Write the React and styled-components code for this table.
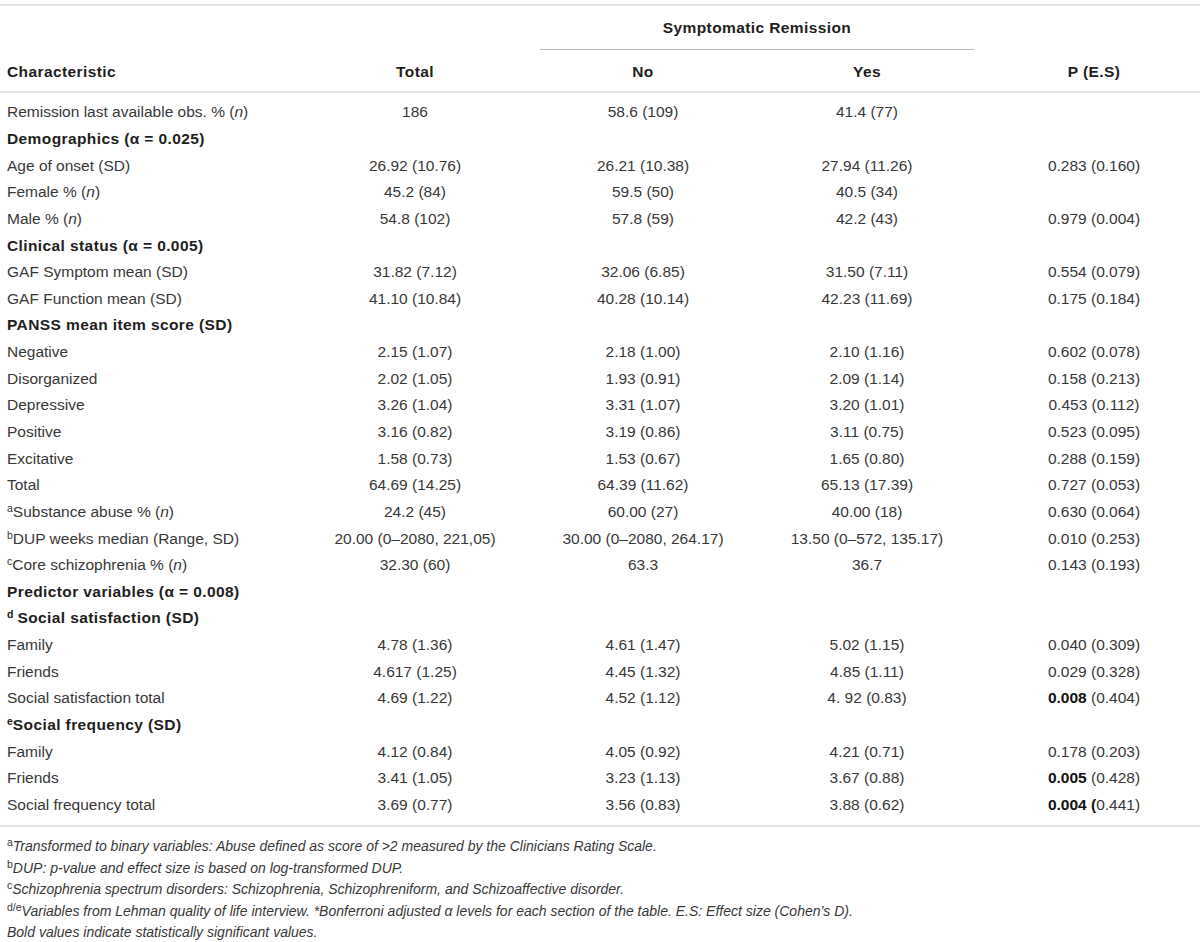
import React from 'react';
import styled, { createGlobalStyle } from 'styled-components';

const GlobalStyle = createGlobalStyle`
  body {
    margin: 0;
    background: #fff;
    font-family: "Liberation Sans", Arial, sans-serif;
    color: #383838;
  }
`;

const COLS = '290px 250px 206px 242px 212px';

const Page = styled.div`
  width: 1200px;
  padding-top: 4px;
`;

const Table = styled.div`
  border-top: 2px solid #e3e3e3;
  border-bottom: 2px solid #e3e3e3;
  padding-bottom: 7px;
`;

const Head = styled.div`
  border-bottom: 2px solid #e3e3e3;
  margin-bottom: 6px;
`;

const Row = styled.div`
  display: grid;
  grid-template-columns: ${COLS};
  height: ${(p) => p.$h || 26.65}px;
  padding-top: ${(p) => p.$pt || 0}px;
  box-sizing: border-box;
  align-items: center;
  font-size: 15.5px;
`;

const Spanner = styled.div`
  grid-column: 3 / 5;
  margin-right: 14px;
  height: 100%;
  display: flex;
  align-items: center;
  justify-content: center;
  border-bottom: 1px solid #b8b8b8;
  font-weight: bold;
  letter-spacing: 0.4px;
  color: #1e1e1e;
`;

const Cell = styled.div`
  text-align: ${(p) => (p.$first ? 'left' : 'center')};
  padding-left: ${(p) => (p.$first ? '7px' : '0')};
  font-weight: ${(p) => (p.$bold ? 'bold' : 'normal')};
  letter-spacing: ${(p) => (p.$bold ? '0.4px' : '0')};
  color: ${(p) => (p.$bold ? '#1e1e1e' : '#383838')};
  white-space: nowrap;
`;

const Sup = styled.sup`
  font-size: 10.5px;
  font-style: normal;
  vertical-align: 5px;
  line-height: 0;
  letter-spacing: 0;
  margin-right: ${(p) => (p.$gap ? '4px' : '0')};
`;

const B = styled.b`
  color: #111;
`;

const Notes = styled.div`
  padding-top: 9px;
  font-size: 14px;
  font-style: italic;
  color: #383838;
`;

const Note = styled.div`
  height: 21.5px;
  line-height: 21.5px;
  padding-left: 7px;
  white-space: nowrap;
`;

const S = (t) => ({ section: true, label: t });
const D = (label, total, no, yes, p) => ({ label, total, no, yes, p });

const rows = [
  D(<>Remission last available obs. % (<i>n</i>)</>, '186', '58.6 (109)', '41.4 (77)', ''),
  S('Demographics (α = 0.025)'),
  D('Age of onset (SD)', '26.92 (10.76)', '26.21 (10.38)', '27.94 (11.26)', '0.283 (0.160)'),
  D(<>Female % (<i>n</i>)</>, '45.2 (84)', '59.5 (50)', '40.5 (34)', ''),
  D(<>Male % (<i>n</i>)</>, '54.8 (102)', '57.8 (59)', '42.2 (43)', '0.979 (0.004)'),
  S('Clinical status (α = 0.005)'),
  D('GAF Symptom mean (SD)', '31.82 (7.12)', '32.06 (6.85)', '31.50 (7.11)', '0.554 (0.079)'),
  D('GAF Function mean (SD)', '41.10 (10.84)', '40.28 (10.14)', '42.23 (11.69)', '0.175 (0.184)'),
  S('PANSS mean item score (SD)'),
  D('Negative', '2.15 (1.07)', '2.18 (1.00)', '2.10 (1.16)', '0.602 (0.078)'),
  D('Disorganized', '2.02 (1.05)', '1.93 (0.91)', '2.09 (1.14)', '0.158 (0.213)'),
  D('Depressive', '3.26 (1.04)', '3.31 (1.07)', '3.20 (1.01)', '0.453 (0.112)'),
  D('Positive', '3.16 (0.82)', '3.19 (0.86)', '3.11 (0.75)', '0.523 (0.095)'),
  D('Excitative', '1.58 (0.73)', '1.53 (0.67)', '1.65 (0.80)', '0.288 (0.159)'),
  D('Total', '64.69 (14.25)', '64.39 (11.62)', '65.13 (17.39)', '0.727 (0.053)'),
  D(<><Sup>a</Sup>Substance abuse % (<i>n</i>)</>, '24.2 (45)', '60.00 (27)', '40.00 (18)', '0.630 (0.064)'),
  D(<><Sup>b</Sup>DUP weeks median (Range, SD)</>, '20.00 (0–2080, 221,05)', '30.00 (0–2080, 264.17)', '13.50 (0–572, 135.17)', '0.010 (0.253)'),
  D(<><Sup>c</Sup>Core schizophrenia % (<i>n</i>)</>, '32.30 (60)', '63.3', '36.7', '0.143 (0.193)'),
  S('Predictor variables (α = 0.008)'),
  S(<><Sup $gap>d</Sup>Social satisfaction (SD)</>),
  D('Family', '4.78 (1.36)', '4.61 (1.47)', '5.02 (1.15)', '0.040 (0.309)'),
  D('Friends', '4.617 (1.25)', '4.45 (1.32)', '4.85 (1.11)', '0.029 (0.328)'),
  D('Social satisfaction total', '4.69 (1.22)', '4.52 (1.12)', '4. 92 (0.83)', <><B>0.008</B> (0.404)</>),
  S(<><Sup>e</Sup>Social frequency (SD)</>),
  D('Family', '4.12 (0.84)', '4.05 (0.92)', '4.21 (0.71)', '0.178 (0.203)'),
  D('Friends', '3.41 (1.05)', '3.23 (1.13)', '3.67 (0.88)', <><B>0.005</B> (0.428)</>),
  D('Social frequency total', '3.69 (0.77)', '3.56 (0.83)', '3.88 (0.62)', <><B>0.004 (</B>0.441)</>),
];

export default function App() {
  return (
    <Page>
      <GlobalStyle />
      <Table>
        <Head>
          <Row $h={43} $pt={2}>
            <Spanner>Symptomatic Remission</Spanner>
          </Row>
          <Row $h={42} $pt={4}>
            <Cell $first $bold>Characteristic</Cell>
            <Cell $bold>Total</Cell>
            <Cell $bold>No</Cell>
            <Cell $bold>Yes</Cell>
            <Cell $bold>P (E.S)</Cell>
          </Row>
        </Head>
        {rows.map((r, i) =>
          r.section ? (
            <Row key={i}>
              <Cell $first $bold>{r.label}</Cell>
            </Row>
          ) : (
            <Row key={i}>
              <Cell $first>{r.label}</Cell>
              <Cell>{r.total}</Cell>
              <Cell>{r.no}</Cell>
              <Cell>{r.yes}</Cell>
              <Cell>{r.p}</Cell>
            </Row>
          )
        )}
      </Table>
      <Notes>
        <Note><Sup>a</Sup>Transformed to binary variables: Abuse defined as score of &gt;2 measured by the Clinicians Rating Scale.</Note>
        <Note><Sup>b</Sup>DUP: p-value and effect size is based on log-transformed DUP.</Note>
        <Note><Sup>c</Sup>Schizophrenia spectrum disorders: Schizophrenia, Schizophreniform, and Schizoaffective disorder.</Note>
        <Note><Sup>d/e</Sup>Variables from Lehman quality of life interview. *Bonferroni adjusted α levels for each section of the table. E.S: Effect size (Cohen’s D).</Note>
        <Note>Bold values indicate statistically significant values.</Note>
      </Notes>
    </Page>
  );
}
